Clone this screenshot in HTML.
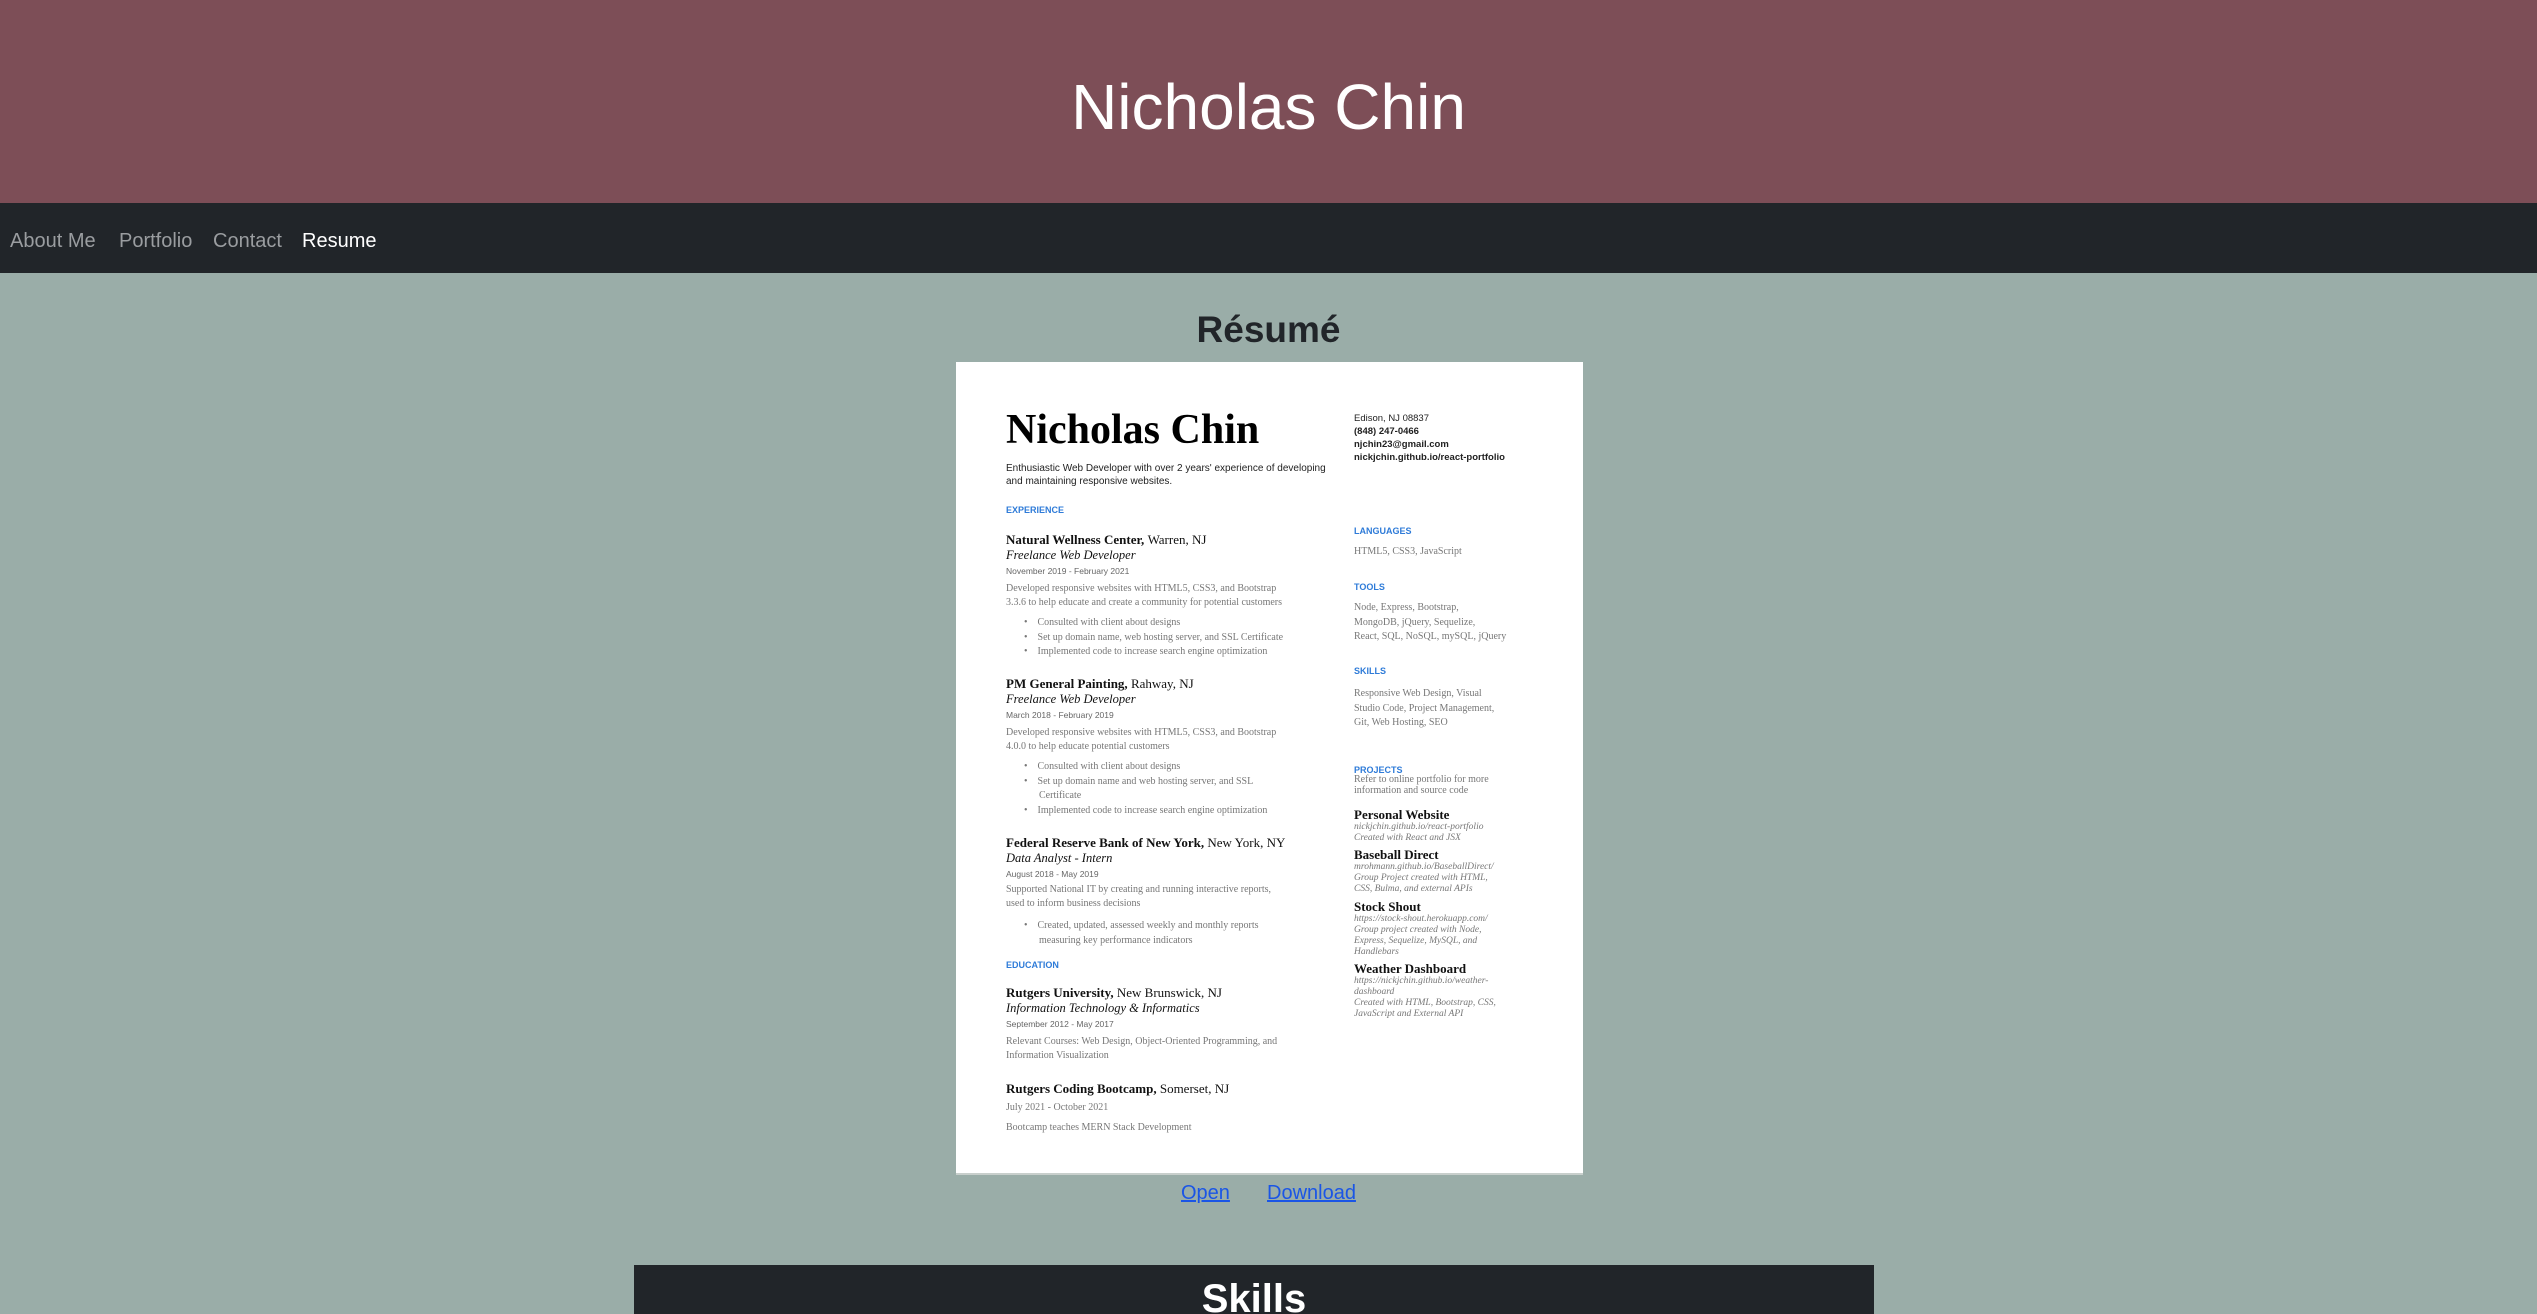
<!DOCTYPE html>
<html><head><meta charset="utf-8"><style>
*{margin:0;padding:0;box-sizing:border-box}
html,body{width:2537px;height:1314px;overflow:hidden}
body{background:#9aada8;font-family:"Liberation Sans",sans-serif;position:relative}
.hdr{position:absolute;left:0;top:0;width:2537px;height:203px;background:#7d4e57}
.hdr h1{position:absolute;left:0;width:2537px;top:67px;text-align:center;color:#fff;font-weight:normal;font-size:64px;line-height:80px}
.nav{position:absolute;left:0;top:203px;width:2537px;height:70px;background:#212529}
.nav span{position:absolute;top:25px;font-size:20px;line-height:26px;color:#9a9da0}
.rt{position:absolute;left:0;width:2537px;top:307px;text-align:center;font-size:37px;font-weight:bold;color:#212529;line-height:46px}
.page{position:absolute;left:956px;top:362px;width:627px;height:813px;background:#fff;border-bottom:2px solid #c8cfcc}
.page div{position:absolute;white-space:nowrap}
.s{font-family:"Liberation Serif",serif}
.h{font-family:"Liberation Serif",serif;font-weight:bold;font-size:13px;color:#111;line-height:16px}
.h i{font-weight:normal;font-style:normal}
.it{font-family:"Liberation Serif",serif;font-style:italic;font-size:12.5px;color:#111;line-height:15px}
.d{font-size:8.5px;color:#666;line-height:11px}
.t{font-family:"Liberation Serif",serif;font-size:10px;color:#777;line-height:14px}
.sec{font-size:9px;font-weight:bold;color:#2e7bd8;line-height:11px}
.r{font-family:"Liberation Serif",serif;font-size:10px;color:#777;line-height:14px}
.ri{font-family:"Liberation Serif",serif;font-style:italic;font-size:9.5px;color:#777;line-height:11px}
.links{position:absolute;top:1180px;font-size:20px;color:#1a55e6;text-decoration:underline;line-height:26px}
.sk{position:absolute;left:634px;top:1265px;width:1240px;height:49px;background:#212529;overflow:hidden}
.sk h2{text-align:center;color:#fff;font-size:40px;line-height:50px;margin-top:9px}
</style></head><body>
<div class="hdr"><h1>Nicholas Chin</h1></div>
<div class="nav"><span style="left:10px">About Me</span><span style="left:119px">Portfolio</span><span style="left:213px">Contact</span><span style="left:302px;color:#fff">Resume</span></div>
<div class="rt">Résumé</div>
<div class="page">
<div class="s" style="left:50px;top:44px;font-size:42px;font-weight:bold;color:#000;line-height:48px">Nicholas Chin</div>
<div style="left:50px;top:100px;font-size:10px;color:#222;line-height:13px">Enthusiastic Web Developer with over 2 years' experience of developing<br>and maintaining responsive websites.</div>
<div class="sec" style="left:50px;top:143px">EXPERIENCE</div>
<div class="h" style="left:50px;top:170px">Natural Wellness Center, <i>Warren, NJ</i></div>
<div class="it" style="left:50px;top:186px">Freelance Web Developer</div>
<div class="d" style="left:50px;top:204px">November 2019 - February 2021</div>
<div class="t" style="left:50px;top:220px">Developed responsive websites with HTML5, CSS3, and Bootstrap<br>3.3.6 to help educate and create a community for potential customers</div>
<div class="t" style="left:68px;top:254px;line-height:14.5px">•&nbsp;&nbsp;&nbsp;&nbsp;Consulted with client about designs<br>•&nbsp;&nbsp;&nbsp;&nbsp;Set up domain name, web hosting server, and SSL Certificate<br>•&nbsp;&nbsp;&nbsp;&nbsp;Implemented code to increase search engine optimization</div>
<div class="h" style="left:50px;top:314px">PM General Painting, <i>Rahway, NJ</i></div>
<div class="it" style="left:50px;top:330px">Freelance Web Developer</div>
<div class="d" style="left:50px;top:348px">March 2018 - February 2019</div>
<div class="t" style="left:50px;top:364px">Developed responsive websites with HTML5, CSS3, and Bootstrap<br>4.0.0 to help educate potential customers</div>
<div class="t" style="left:68px;top:398px;line-height:14.5px">•&nbsp;&nbsp;&nbsp;&nbsp;Consulted with client about designs<br>•&nbsp;&nbsp;&nbsp;&nbsp;Set up domain name and web hosting server, and SSL<br>&nbsp;&nbsp;&nbsp;&nbsp;&nbsp;&nbsp;Certificate<br>•&nbsp;&nbsp;&nbsp;&nbsp;Implemented code to increase search engine optimization</div>
<div class="h" style="left:50px;top:473px">Federal Reserve Bank of New York, <i>New York, NY</i></div>
<div class="it" style="left:50px;top:489px">Data Analyst - Intern</div>
<div class="d" style="left:50px;top:507px">August 2018 - May 2019</div>
<div class="t" style="left:50px;top:521px">Supported National IT by creating and running interactive reports,<br>used to inform business decisions</div>
<div class="t" style="left:68px;top:556px;line-height:15px">•&nbsp;&nbsp;&nbsp;&nbsp;Created, updated, assessed weekly and monthly reports<br>&nbsp;&nbsp;&nbsp;&nbsp;&nbsp;&nbsp;measuring key performance indicators</div>
<div class="sec" style="left:50px;top:598px">EDUCATION</div>
<div class="h" style="left:50px;top:623px">Rutgers University, <i>New Brunswick, NJ</i></div>
<div class="it" style="left:50px;top:639px">Information Technology &amp; Informatics</div>
<div class="d" style="left:50px;top:657px">September 2012 - May 2017</div>
<div class="t" style="left:50px;top:673px">Relevant Courses: Web Design, Object-Oriented Programming, and<br>Information Visualization</div>
<div class="h" style="left:50px;top:719px">Rutgers Coding Bootcamp, <i>Somerset, NJ</i></div>
<div class="t" style="left:50px;top:739px">July 2021 - October 2021</div>
<div class="t" style="left:50px;top:759px">Bootcamp teaches MERN Stack Development</div>

<div style="left:398px;top:50px;font-size:9.5px;color:#222;line-height:13px">Edison, NJ 08837<br><b>(848) 247-0466<br>njchin23@gmail.com<br>nickjchin.github.io/react-portfolio</b></div>
<div class="sec" style="left:398px;top:164px">LANGUAGES</div>
<div class="r" style="left:398px;top:183px">HTML5, CSS3, JavaScript</div>
<div class="sec" style="left:398px;top:220px">TOOLS</div>
<div class="r" style="left:398px;top:239px;line-height:14.5px">Node, Express, Bootstrap,<br>MongoDB, jQuery, Sequelize,<br>React, SQL, NoSQL, mySQL, jQuery</div>
<div class="sec" style="left:398px;top:304px">SKILLS</div>
<div class="r" style="left:398px;top:325px;line-height:14.5px">Responsive Web Design, Visual<br>Studio Code, Project Management,<br>Git, Web Hosting, SEO</div>
<div class="sec" style="left:398px;top:403px">PROJECTS</div>
<div class="r" style="left:398px;top:412px;line-height:11px">Refer to online portfolio for more<br>information and source code</div>
<div class="h" style="left:398px;top:445px">Personal Website</div>
<div class="ri" style="left:398px;top:460px">nickjchin.github.io/react-portfolio<br>Created with React and JSX</div>
<div class="h" style="left:398px;top:485px">Baseball Direct</div>
<div class="ri" style="left:398px;top:500px">mrohmann.github.io/BaseballDirect/<br>Group Project created with HTML,<br>CSS, Bulma, and external APIs</div>
<div class="h" style="left:398px;top:537px">Stock Shout</div>
<div class="ri" style="left:398px;top:552px">https://stock-shout.herokuapp.com/<br>Group project created with Node,<br>Express, Sequelize, MySQL, and<br>Handlebars</div>
<div class="h" style="left:398px;top:599px">Weather Dashboard</div>
<div class="ri" style="left:398px;top:614px">https://nickjchin.github.io/weather-<br>dashboard<br>Created with HTML, Bootstrap, CSS,<br>JavaScript and External API</div>
</div>
<div class="links" style="left:1181px">Open</div>
<div class="links" style="left:1267px">Download</div>
<div class="sk"><h2>Skills</h2></div>
</body></html>
